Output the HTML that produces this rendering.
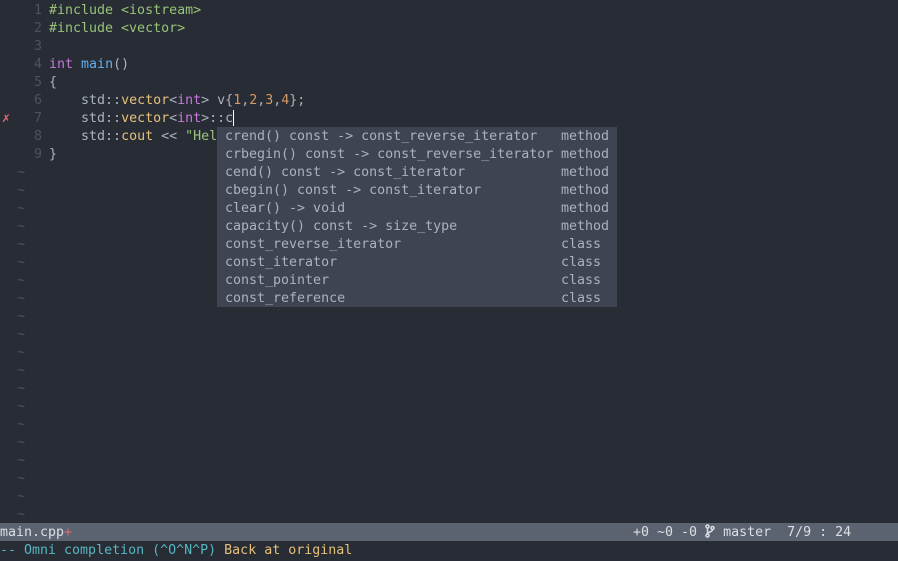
<!DOCTYPE html><html><head><style>
body{margin:0;width:898px;height:560px;background:#282c34;overflow:hidden;font-family:"DejaVu Sans Mono",monospace;font-size:13.3px;color:#abb2bf}
.r{position:absolute;left:0;height:18px;line-height:20px;white-space:pre}
.n{position:absolute;left:16px;width:26px;text-align:right;color:#4b5263}
.t{position:absolute;left:49px}
.k{color:#c678dd}.f{color:#61afef}.y{color:#e5c07b}.o{color:#d19a66}.g{color:#98c379}.c{color:#56b6c2}
.tl{position:absolute;left:17px;color:#4b5263}
#pop{position:absolute;left:217px;top:127px;width:400px;height:180px;background:#3e4452;color:#abb2bf}
#pop div{height:18px;line-height:20px;white-space:pre;padding-left:8px;position:relative}
#pop span{position:absolute;left:344px}
#st{position:absolute;left:0;top:523px;width:898px;height:18px;line-height:20px;background:#5c6370;color:#dcdfe4;white-space:pre}
#cmd{position:absolute;left:0;top:541px;height:18px;line-height:20px;white-space:pre}
</style></head><body>
<div class="r" style="top:1px"><span class="n">1</span><span class="t"><span class="g">#include &lt;iostream&gt;</span></span></div>
<div class="r" style="top:19px"><span class="n">2</span><span class="t"><span class="g">#include &lt;vector&gt;</span></span></div>
<div class="r" style="top:37px"><span class="n">3</span></div>
<div class="r" style="top:55px"><span class="n">4</span><span class="t"><span class="k">int</span> <span class="f">main</span>()</span></div>
<div class="r" style="top:73px"><span class="n">5</span><span class="t">{</span></div>
<div class="r" style="top:91px"><span class="n">6</span><span class="t">    std::<span class="y">vector</span>&lt;<span class="k">int</span>&gt; v{<span class="o">1</span>,<span class="o">2</span>,<span class="o">3</span>,<span class="o">4</span>};</span></div>
<div class="r" style="top:109px"><span style="position:absolute;left:2px;color:#e06c75">✗</span><span class="n">7</span><span class="t">    std::<span class="y">vector</span>&lt;<span class="k">int</span>&gt;::c</span><span style="position:absolute;left:233px;top:1px;width:1px;height:16px;background:#fff"></span></div>
<div class="r" style="top:127px"><span class="n">8</span><span class="t">    std::<span class="y">cout</span> &lt;&lt; <span class="g">"Hel</span></span></div>
<div class="r" style="top:145px"><span class="n">9</span><span class="t">}</span></div>
<div id="tl"></div>
<div id="pop">
<div>crend() const -&gt; const_reverse_iterator<span>method</span></div>
<div>crbegin() const -&gt; const_reverse_iterator<span>method</span></div>
<div>cend() const -&gt; const_iterator<span>method</span></div>
<div>cbegin() const -&gt; const_iterator<span>method</span></div>
<div>clear() -&gt; void<span>method</span></div>
<div>capacity() const -&gt; size_type<span>method</span></div>
<div>const_reverse_iterator<span>class</span></div>
<div>const_iterator<span>class</span></div>
<div>const_pointer<span>class</span></div>
<div>const_reference<span>class</span></div>
</div>
<div id="st">main.cpp<span style="color:#e06c75">+</span><span style="position:absolute;left:633px">+0 ~0 -0 <svg width="10" height="14" viewBox="0 0 10 14" style="vertical-align:-2px"><g stroke="#dcdfe4" stroke-width="1.5" fill="none"><circle cx="2.5" cy="2.5" r="1.5"/><circle cx="2.5" cy="11.5" r="1.5"/><circle cx="7.5" cy="4" r="1.5"/><path d="M2.5 4v6M7.5 5.5c0 3-5 2-5 4.5"/></g></svg> master  7/9 : 24</span></div>
<div id="cmd"><span class="c">-- Omni completion (^O^N^P)</span> <span class="y">Back at original</span></div>
<script>
var h='';for(var i=9;i<29;i++)h+='<div class="r" style="top:'+(1+18*i)+'px"><span class="tl">~</span></div>';document.getElementById('tl').innerHTML=h;
</script>
</body></html>
